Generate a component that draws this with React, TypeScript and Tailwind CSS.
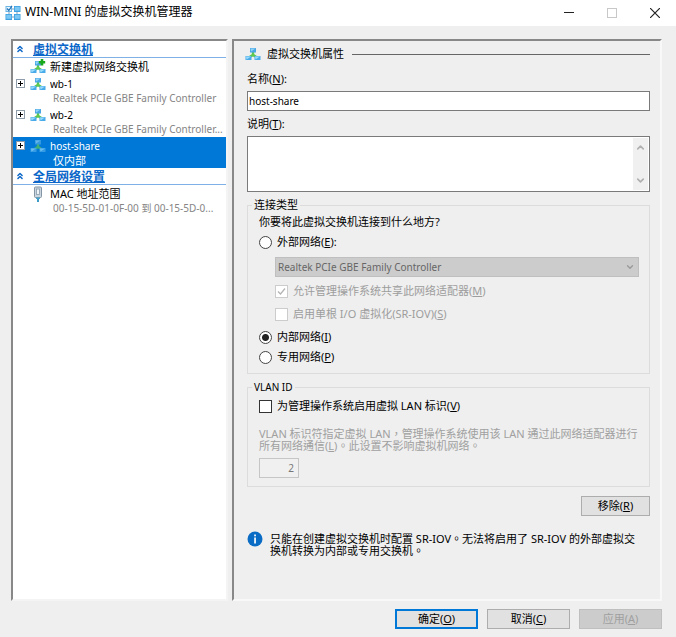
import type { ReactNode } from "react";
import { ChevronDown, ChevronUp, ChevronsUp } from "lucide-react";

function SwitchIcon({ plus = false, dim = false }: { plus?: boolean; dim?: boolean }) {
  return (
    <svg viewBox="0 0 16 16" className={dim ? "w-4 h-4 shrink-0 opacity-70" : "w-4 h-4 shrink-0"} aria-hidden="true">
      <path d="M8 6v3.500M4 11.500 7 9.500h2l3 2" fill="none" stroke="#5cc84e" strokeWidth="2.400" />
      <rect x="5" y="2" width="6" height="4.500" fill="#4aa6e4" />
      <path d="M5.500 2.500h5L6 5.500z" fill="#8fd3f7" />
      <rect x="0.500" y="10" width="6" height="4" fill="#4aabea" />
      <path d="M1 10.500h5L1.500 13.500z" fill="#9adcfa" />
      <rect x="9.500" y="10" width="6" height="4" fill="#4aabea" />
      <path d="M10 10.500h5L10.500 13.500z" fill="#9adcfa" />
      {plus && <path d="M12 0v6.500M8.800 3.200h6.400" stroke="#17a81d" strokeWidth="2.600" />}
    </svg>
  );
}

function AppIcon() {
  return (
    <svg viewBox="0 0 16 16" className="w-4 h-4 shrink-0" aria-hidden="true">
      <path d="M4 6v4M12 6v4M6 12h4M6 4h4" stroke="#7f9db5" strokeWidth="1" />
      <rect x="1" y="1.500" width="5.500" height="5" fill="#e9f6fe" stroke="#6bb3e3" />
      <path d="M2 3.500 3.800 5.500 7 .8" fill="none" stroke="#2374b8" strokeWidth="1.200" />
      <rect x="9" y="1" width="6.500" height="6" fill="#3ea0e0" />
      <rect x="9.800" y="1.800" width="5" height="4" fill="#7cc8f4" />
      <rect x="0.500" y="9" width="6.500" height="6" fill="#3ea0e0" />
      <rect x="1.300" y="9.800" width="5" height="4" fill="#7cc8f4" />
      <rect x="9" y="9" width="6.500" height="6" fill="#3ea0e0" />
      <rect x="9.800" y="9.800" width="5" height="4" fill="#7cc8f4" />
    </svg>
  );
}

function AdapterIcon() {
  return (
    <svg viewBox="0 0 16 16" className="w-4 h-4 shrink-0" aria-hidden="true">
      <rect x="4.500" y="1" width="7" height="10.500" rx="1" fill="#c9d6e0" stroke="#8595a3" />
      <rect x="6.500" y="3" width="3" height="5.500" fill="#eef4f8" stroke="#8b9baa" strokeWidth=".8" />
      <path d="M6 11.500h4v1.500H6z" fill="#52a9cf" />
      <path d="M8 12.500V16" stroke="#3d9bc8" strokeWidth="2" />
    </svg>
  );
}

function InfoIcon() {
  return (
    <svg viewBox="0 0 16 16" className="w-4 h-4 shrink-0" aria-hidden="true">
      <circle cx="8" cy="8" r="7.500" fill="#0a6cc4" />
      <rect x="7.200" y="3.500" width="1.700" height="1.800" fill="#fff" />
      <rect x="7.200" y="6.500" width="1.700" height="6" fill="#fff" />
    </svg>
  );
}

function SectionHeader({ children }: { children: ReactNode }) {
  return (
    <h2 className="flex items-center h-[17px] px-0.5 border-b border-[#7fb0e6] text-[#0a66c8]">
      <ChevronsUp className="w-[10px] h-3 shrink-0" strokeWidth={3.5} />
      <a href="#" className="ml-2 pt-px text-[12px] leading-4 font-bold underline">
        {children}
      </a>
    </h2>
  );
}

type TreeItemProps = {
  icon: ReactNode;
  title: string;
  detail?: string;
  latin?: boolean;
  expandable?: boolean;
  selected?: boolean;
};

function TreeItem({ icon, title, detail, latin, expandable, selected }: TreeItemProps) {
  return (
    <li className={selected ? "bg-[#0078d7] text-white" : ""}>
      <div className="flex items-center h-[17px] pl-[3px]">
        {expandable ? (
          <button
            aria-label={"展开 " + title}
            className="relative w-[9px] h-[9px] shrink-0 border border-[#8f9dab] bg-white before:absolute before:left-px before:top-[3px] before:w-[5px] before:h-px before:bg-black after:absolute after:left-[3px] after:top-px after:w-px after:h-[5px] after:bg-black"
          />
        ) : (
          <span className="w-[9px] shrink-0" />
        )}
        <span className="ml-[5px] mr-1 flex">{icon}</span>
        <span className={expandable ? "truncate text-[10px]" : "truncate"}>{title}</span>
      </div>
      {detail && (
        <div
          className={
            "h-[14px] leading-[13px] pl-10 whitespace-nowrap overflow-hidden " +
            (latin ? "text-[10px] " : "") +
            (selected ? "text-white" : "text-[#858585]")
          }
        >
          {detail}
        </div>
      )}
    </li>
  );
}

const boxClass =
  "appearance-none w-[13px] h-[13px] shrink-0 bg-white border border-[#333] disabled:border-[#cccccc]";
const radioClass =
  "appearance-none w-[13px] h-[13px] shrink-0 rounded-full bg-white border border-[#444] checked:bg-[radial-gradient(circle,#222_0_3px,#fff_4px)]";
const buttonClass = "h-5 border bg-[#e1e1e1] text-center leading-[18px]";
const groupClass = "min-w-0 border border-[#dcdcdc] pl-[11px] pr-[10px]";
const legendClass = "-ml-[7px] px-0.5 leading-4";
// the TC face centres full-width commas and stops in their cell
const noteClass = "leading-3 font-['Noto_Sans','Noto_Sans_CJK_TC',sans-serif]";

export default function App() {
  return (
    <div className="min-h-screen flex flex-col bg-[#efefef] text-black text-[11px] leading-4 font-['Noto_Sans','Noto_Sans_CJK_SC',sans-serif]">
      <header className="flex items-center h-[26px] bg-white pl-[5px]">
        <AppIcon />
        <h1 className="ml-1 text-[12px] pb-0.5">WIN-MINI 的虚拟交换机管理器</h1>
        <div className="ml-auto flex h-6">
          <button aria-label="最小化" className="w-[43px] grid place-items-center">
            <svg viewBox="0 0 10 10" className="w-[10px] h-[10px]">
              <path d="M0 4.500h10" stroke="#222" />
            </svg>
          </button>
          <button aria-label="最大化" disabled className="w-[43px] grid place-items-center">
            <svg viewBox="0 0 10 10" className="w-[10px] h-[10px]">
              <rect x=".5" y=".5" width="9" height="9" fill="none" stroke="#c8c8c8" />
            </svg>
          </button>
          <button aria-label="关闭" className="w-[43px] grid place-items-center">
            <svg viewBox="0 0 10 10" className="w-[10px] h-[10px]">
              <path d="M0 0l10 10M10 0L0 10" stroke="#222" strokeWidth="1.200" />
            </svg>
          </button>
        </div>
      </header>

      <div className="flex-1 grid grid-cols-[217px_1fr] gap-1 pt-[13px] pl-[11px] pr-[14px]">
        <nav className="min-w-0 bg-white border-2 border-t-[#888] border-l-[#888] border-r-[#f4f4f4] border-b-[#f4f4f4]">
          <SectionHeader>虚拟交换机</SectionHeader>
          <ul>
            <TreeItem icon={<SwitchIcon plus />} title="新建虚拟网络交换机" />
            <TreeItem icon={<SwitchIcon />} title="wb-1" detail="Realtek PCIe GBE Family Controller" latin expandable />
            <TreeItem icon={<SwitchIcon />} title="wb-2" detail="Realtek PCIe GBE Family Controller..." latin expandable />
            <TreeItem icon={<SwitchIcon dim />} title="host-share" detail="仅内部" expandable selected />
          </ul>
          <SectionHeader>全局网络设置</SectionHeader>
          <ul>
            <TreeItem icon={<AdapterIcon />} title="MAC 地址范围" detail="00-15-5D-01-0F-00 到 00-15-5D-0..." latin />
          </ul>
        </nav>

        <main className="min-w-0 flex flex-col border-2 border-t-[#888] border-l-[#888] border-r-[#f8f8f8] border-b-[#f8f8f8] pl-[13px] pr-[10px] pt-1 pb-9">
          <div className="flex items-center h-[18px]">
            <span className="-ml-0.5">
              <SwitchIcon />
            </span>
            <h2 className="ml-1.5">虚拟交换机属性</h2>
            <div className="ml-2 flex-1 h-px bg-[#666]" />
          </div>

          <label htmlFor="name" className="mt-2 leading-4">
            名称(<u>N</u>):
          </label>
          <input
            id="name"
            defaultValue="host-share"
            className="mt-1 h-5 px-px text-[10px] bg-white border border-[#7a7a7a] outline-none"
          />

          <label htmlFor="notes" className="mt-[5px] leading-4">
            说明(<u>T</u>):
          </label>
          <div className="mt-1 h-14 flex bg-white border border-[#7a7a7a]">
            <textarea id="notes" className="flex-1 resize-none outline-none overflow-hidden" />
            <div className="w-[15px] my-px mr-px flex flex-col justify-between items-center py-1 bg-[#f0f0f0] text-[#b0b0b0]">
              <ChevronUp className="w-[11px] h-[11px]" strokeWidth={3.5} />
              <ChevronDown className="w-[11px] h-[11px]" strokeWidth={3.5} />
            </div>
          </div>

          <fieldset className={groupClass + " mt-[5px] pb-1.5"}>
            <legend className={legendClass}>连接类型</legend>
            <p className="leading-[18px]">你要将此虚拟交换机连接到什么地方?</p>
            <label className="mt-px flex items-center h-5 gap-[5px]">
              <input type="radio" name="conn" className={radioClass} />
              <span>
                外部网络(<u>E</u>):
              </span>
            </label>
            <div className="relative mt-[5px] ml-4">
              <select
                disabled
                aria-label="外部网络适配器"
                className="block w-full h-5 appearance-none px-0.5 text-[10px] bg-[#cccccc] border border-[#bfbfbf] text-[#666] opacity-100"
              >
                <option>Realtek PCIe GBE Family Controller</option>
              </select>
              <ChevronDown className="absolute right-1 top-[5px] w-[10px] h-[10px] text-[#999]" strokeWidth={3} />
            </div>
            <label className="mt-1 ml-4 flex items-center h-5 gap-[5px] text-[#9d9d9d]">
              <span className="relative flex">
                <input type="checkbox" defaultChecked disabled className={boxClass} />
                <svg viewBox="0 0 13 13" className="absolute inset-0 w-[13px] h-[13px] pointer-events-none">
                  <path d="M3 6.500 5.500 9 10 3.500" fill="none" stroke="#b4b4b4" strokeWidth="1.300" />
                </svg>
              </span>
              <span>
                允许管理操作系统共享此网络适配器(<u>M</u>)
              </span>
            </label>
            <label className="mt-[3px] ml-4 flex items-center h-5 gap-[5px] text-[#9d9d9d]">
              <input type="checkbox" disabled className={boxClass} />
              <span>
                启用单根 I/O 虚拟化(SR-IOV)(<u>S</u>)
              </span>
            </label>
            <label className="mt-[3px] flex items-center h-5 gap-[5px]">
              <input type="radio" name="conn" defaultChecked className={radioClass} />
              <span>
                内部网络(<u>I</u>)
              </span>
            </label>
            <label className="flex items-center h-5 gap-[5px]">
              <input type="radio" name="conn" className={radioClass} />
              <span>
                专用网络(<u>P</u>)
              </span>
            </label>
          </fieldset>

          <fieldset className={groupClass + " mt-[5px] pb-2"}>
            <legend className={legendClass + " text-[10px]"}>VLAN ID</legend>
            <label className="mt-px flex items-center h-5 gap-[5px]">
              <input type="checkbox" className={boxClass} />
              <span>
                为管理操作系统启用虚拟 LAN 标识(<u>V</u>)
              </span>
            </label>
            <label htmlFor="vlan" className={noteClass + " mt-3 -mr-1 block text-[#a0a0a0]"}>
              VLAN 标识符指定虚拟 LAN，管理操作系统使用该 LAN 通过此网络适配器进行所有网络通信(<u>L</u>)。此设置不影响虚拟机网络。
            </label>
            <input
              id="vlan"
              disabled
              defaultValue="2"
              className="mt-1.5 block w-10 h-5 px-1 text-right text-[10px] bg-[#f0f0f0] border border-[#c6c6c6] text-[#777]"
            />
          </fieldset>

          <button className={buttonClass + " mt-[9px] w-[69px] self-end border-[#adadad]"}>
            移除(<u>R</u>)
          </button>

          <div className="mt-[15px] flex gap-[7px]">
            <InfoIcon />
            <p className={noteClass + " pr-2 pt-0.5"}>
              只能在创建虚拟交换机时配置 SR-IOV。无法将启用了 SR-IOV 的外部虚拟交换机转换为内部或专用交换机。
            </p>
          </div>
        </main>
      </div>

      <footer className="flex justify-end gap-[9px] pt-2 pb-2 pr-[14px]">
        <button className={buttonClass + " w-[83px] border-[#0078d7] ring-1 ring-inset ring-[#0078d7]"}>
          确定(<u>O</u>)
        </button>
        <button className={buttonClass + " w-[83px] border-[#adadad]"}>
          取消(<u>C</u>)
        </button>
        <button disabled className="h-5 w-[83px] border border-[#bfbfbf] bg-[#cccccc] text-[#9f9f9f] text-center leading-[18px]">
          应用(<u>A</u>)
        </button>
      </footer>
    </div>
  );
}
